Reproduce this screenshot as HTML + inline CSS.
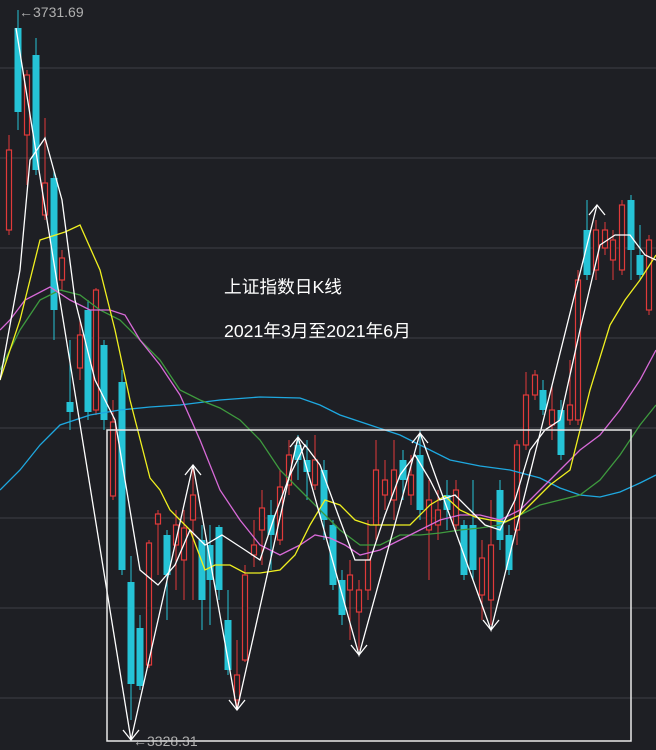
<!DOCTYPE html>
<html><head><meta charset="utf-8"><style>
html,body{margin:0;padding:0;background:#1e1f24;}
svg{display:block}
</style></head><body>
<svg id="s" width="656" height="750" viewBox="0 0 656 750" xmlns="http://www.w3.org/2000/svg">
<rect width="656" height="750" fill="#1e1f24"/>
<g stroke="#33353b" stroke-width="1.5">
<line x1="0" y1="68" x2="656" y2="68"/><line x1="0" y1="158" x2="656" y2="158"/>
<line x1="0" y1="248" x2="656" y2="248"/><line x1="0" y1="338" x2="656" y2="338"/>
<line x1="0" y1="428" x2="656" y2="428"/><line x1="0" y1="518" x2="656" y2="518"/>
<line x1="0" y1="608" x2="656" y2="608"/><line x1="0" y1="698" x2="656" y2="698"/>
</g>
<g id="c"></g>
<g id="l" fill="none" stroke-width="1.3"></g>
<rect x="107" y="430" width="524" height="311" fill="none" stroke="#e8e8e8" stroke-width="1.5"/>
<text x="224" y="293" fill="#fff" font-size="17.7" font-family="Liberation Sans, Noto Sans CJK SC, sans-serif">上证指数日K线</text>
<text x="224" y="337" fill="#fff" font-size="17.7" font-family="Liberation Sans, Noto Sans CJK SC, sans-serif">2021年3月至2021年6月</text>
<text x="19" y="17" fill="#b0b0b0" font-size="14" font-family="Liberation Sans, sans-serif">←3731.69</text>
<text x="133" y="746" fill="#b0b0b0" font-size="14" font-family="Liberation Sans, sans-serif">←3328.31</text>
</svg>
<script>
var d=[[9,150,230,135,235,'r'],[18,28,112,10,130,'c'],[27,75,135,70,185,'r'],[36,55,170,38,175,'c'],[45,183,215,118,220,'r'],[54,178,310,170,340,'c'],[62,258,280,250,290,'r'],[70,402,412,340,430,'c'],[80,335,368,320,380,'r'],[88,310,412,300,420,'c'],[96,290,410,288,415,'r'],[104,345,420,340,430,'c'],[113,422,496,400,500,'r'],[122,382,570,370,575,'c'],[131,582,684,556,720,'c'],[140,628,686,615,690,'c'],[149,543,665,540,668,'r'],[158,514,524,510,575,'r'],[167,535,575,530,620,'c'],[176,525,545,510,590,'r'],[184,528,560,510,600,'r'],[193,495,520,465,600,'r'],[202,540,600,525,630,'c'],[210,545,580,525,625,'c'],[219,527,590,525,600,'c'],[228,620,670,590,675,'c'],[237,675,700,640,710,'r'],[245,575,660,565,662,'r'],[254,545,555,520,567,'r'],[262,508,530,490,565,'r'],[271,515,535,500,570,'c'],[280,487,540,470,545,'r'],[289,455,485,440,495,'r'],[298,445,460,435,480,'c'],[307,460,472,440,500,'c'],[315,460,485,435,490,'r'],[324,470,520,460,540,'c'],[333,525,585,520,590,'c'],[342,580,615,570,625,'c'],[350,575,590,560,640,'r'],[359,590,612,580,650,'r'],[368,560,590,520,600,'r'],[376,470,525,440,540,'r'],[385,480,495,460,510,'r'],[394,470,500,440,520,'r'],[403,460,480,450,500,'c'],[411,475,495,455,505,'r'],[420,455,510,430,520,'c'],[429,500,530,480,580,'r'],[438,510,525,490,540,'r'],[447,495,510,480,530,'c'],[456,490,525,480,530,'r'],[464,525,575,520,580,'c'],[473,525,570,480,580,'c'],[482,558,595,540,620,'r'],[491,545,600,500,625,'r'],[500,490,540,480,550,'c'],[509,535,570,525,575,'c'],[517,445,530,440,545,'r'],[526,395,445,372,450,'r'],[535,375,395,370,400,'r'],[543,390,410,380,415,'c'],[552,410,425,385,440,'r'],[561,410,455,400,460,'c'],[570,405,420,360,425,'r'],[578,280,420,270,425,'r'],[587,230,275,200,280,'c'],[596,230,270,220,280,'r'],[605,230,248,222,255,'r'],[613,240,260,230,280,'r'],[622,205,270,200,275,'r'],[631,200,250,195,280,'c'],[640,255,275,225,280,'c'],[649,240,310,235,315,'r']];
var h='';d.forEach(function(a){var col=a[5]=='r'?'#e03a3a':'#25c3d6';
h+='<line x1="'+a[0]+'" y1="'+a[3]+'" x2="'+a[0]+'" y2="'+a[4]+'" stroke="'+col+'" stroke-width="1"/>';
if(a[5]=='r')h+='<rect x="'+(a[0]-2.5)+'" y="'+a[1]+'" width="5" height="'+(a[2]-a[1])+'" fill="#1e1f24" stroke="'+col+'" stroke-width="1.2"/>';
else h+='<rect x="'+(a[0]-3.5)+'" y="'+a[1]+'" width="7" height="'+(a[2]-a[1])+'" fill="'+col+'"/>';});
document.getElementById('c').innerHTML=h;
function pl(p,c){return '<polyline points="'+p+'" stroke="'+c+'"/>';}
var L='';
L+=pl('0,490 20,470 40,445 60,425 90,415 120,410 150,407 180,405 220,400 260,397 300,398 320,405 340,415 370,425 400,435 420,445 450,460 480,466 510,470 540,478 560,488 580,495 600,497 620,492 640,483 656,475','#1ea8e0');
L+=pl('0,370 20,330 40,300 60,290 80,295 100,310 120,320 140,340 160,360 180,390 200,400 220,408 240,420 260,440 280,470 300,490 320,510 340,530 360,545 380,545 400,535 420,535 440,533 460,530 480,528 500,525 520,515 540,505 560,500 580,495 600,480 620,455 640,425 656,405','#3e9a3e');
L+=pl('0,330 10,320 25,300 50,287 70,300 90,310 110,310 125,315 140,340 160,365 180,395 200,440 220,490 240,520 260,545 280,555 300,545 315,535 330,538 345,545 360,555 380,550 400,540 420,530 440,520 460,515 480,515 500,520 520,510 540,490 560,470 580,450 600,435 620,410 640,380 656,350','#d86ad8');
L+=pl('0,380 20,320 40,240 65,232 80,225 100,270 115,330 130,400 150,478 160,490 170,510 190,530 205,570 215,565 230,565 245,573 260,573 280,570 295,555 310,525 325,500 340,505 355,520 370,525 390,525 410,525 430,505 445,496 460,510 475,517 490,520 505,522 520,515 535,500 550,485 570,470 590,390 610,325 625,300 640,280 656,255','#f0f020');
L+=pl('0,380 20,270 30,160 45,138 62,200 75,300 95,380 115,420 130,510 140,570 158,585 175,565 190,530 205,545 222,535 245,550 260,560 275,515 290,475 305,445 320,465 340,520 355,560 370,560 385,515 400,475 415,455 430,480 440,500 455,495 470,510 485,525 500,530 515,500 530,450 545,430 560,420 580,330 600,245 615,235 630,235 645,255 656,260','#ffffff');
L+=pl('16,28 131,740 193,465 237,710 298,437 359,655 420,433 491,630 597,205','#ffffff');
var ar=[[131,740,1],[193,465,-1],[237,710,1],[298,437,-1],[359,655,1],[420,433,-1],[491,630,1],[597,205,-1]];
ar.forEach(function(a){var s=a[2]*10;L+='<polyline points="'+(a[0]-8)+','+(a[1]-s)+' '+a[0]+','+a[1]+' '+(a[0]+8)+','+(a[1]-s)+'" stroke="#fff"/>';});
document.getElementById('l').innerHTML=L;
</script>
</body></html>
